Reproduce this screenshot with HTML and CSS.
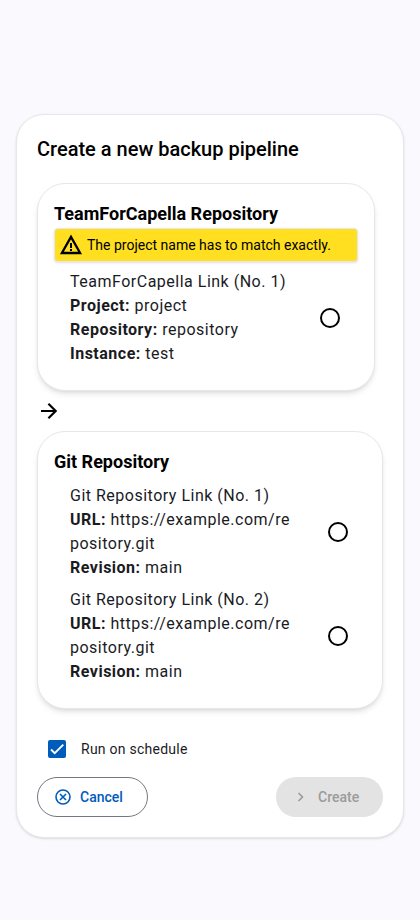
FILE: index.html
```html
<!DOCTYPE html>
<html lang="en">
<head>
<meta charset="utf-8">
<title>Create a new backup pipeline</title>
<link rel="stylesheet" href="styles.css">
</head>
<body>
<main class="dialog">
  <h2 class="title">Create a new backup pipeline</h2>
  <section class="card card-t4c">
    <h3 class="heading">TeamForCapella Repository</h3>
    <div class="warning">
      <svg class="icon" viewBox="0 0 24 24"><path d="M12 3.9 2.9 20H21.1Z" fill="none" stroke="#000" stroke-width="2.3"/><path d="M11 10h2v5h-2zM11 16h2v2h-2z"/></svg>
      <span>The project name has to match exactly.</span>
    </div>
    <div class="option">
      <div class="details"><div>TeamForCapella Link (No. 1)</div><div><b>Project:</b> project</div><div><b>Repository:</b> repository</div><div><b>Instance:</b> test</div></div>
      <span class="radio"></span>
    </div>
  </section>
  <svg class="arrow" viewBox="0 0 24 24"><path d="M4 12H18.5M11.4 4.7 18.7 12 11.4 19.3"/></svg>
  <section class="card card-git">
    <h3 class="heading">Git Repository</h3>
    <div class="option">
      <div class="details"><div>Git Repository Link (No. 1)</div><div><b>URL:</b> https://example.com/repository.git</div><div><b>Revision:</b> main</div></div>
      <span class="radio"></span>
    </div>
    <div class="option">
      <div class="details"><div>Git Repository Link (No. 2)</div><div><b>URL:</b> https://example.com/repository.git</div><div><b>Revision:</b> main</div></div>
      <span class="radio"></span>
    </div>
  </section>
  <div class="schedule">
    <span class="checkbox"><svg viewBox="0 0 24 24"><path d="M1.73 12.91 8.1 19.28 22.79 4.59"/></svg></span>
    <span>Run on schedule</span>
  </div>
  <div class="actions">
    <button class="button cancel"><svg viewBox="0 0 18 18"><circle cx="9" cy="9" r="7"/><path d="m6 6 6 6m0-6-6 6"/></svg>Cancel</button>
    <button class="button create" disabled><svg viewBox="0 0 18 18"><path d="m6.5 5 4 4-4 4"/></svg>Create</button>
  </div>
</main>
</body>
</html>
```
FILE: styles.css
```css
* { box-sizing: border-box; }
body {
  min-height: 100vh;
  margin: 0;
  padding: 114px 16px 0;
  background: #faf9fe;
  color: #000;
  font-family: Roboto, "Liberation Sans", sans-serif;
}
.dialog {
  width: 388px;
  height: 724px;
  padding: 20px;
  border: 1px solid #e5e7eb;
  border-radius: 28px;
  background: #fff;
  box-shadow: 0 1px 3px rgb(0 0 0 / 10%), 0 1px 2px -1px rgb(0 0 0 / 10%);
}
.title {
  margin: 0 0 20px;
  font-size: 20px;
  font-weight: 500;
  line-height: 28px;
}
.card {
  padding: 16px;
  border: 1px solid #e5e7eb;
  border-radius: 28px;
  background: #fff;
  box-shadow: 0 4px 6px -1px rgb(0 0 0 / 10%), 0 2px 4px -2px rgb(0 0 0 / 10%);
}
.card-t4c { width: 338px; height: 208px; }
.card-git { width: 346px; height: 278px; }
.heading {
  margin: 0;
  font-size: 18px;
  font-weight: 700;
  line-height: 28px;
}
.card-git .heading { margin-bottom: 4px; }
.warning {
  display: flex;
  align-items: center;
  gap: 4px;
  height: 34px;
  padding: 4px;
  border: 1px solid #e5e7eb;
  border-radius: 4px;
  background: #ffdf20;
  box-shadow: 0 1px 3px rgb(0 0 0 / 10%), 0 1px 2px -1px rgb(0 0 0 / 10%);
  font-size: 14px;
  white-space: nowrap;
}
.icon { width: 24px; height: 24px; flex: none; }
.option {
  display: flex;
  align-items: center;
  justify-content: space-between;
  padding: 4px 18px 4px 16px;
}
.card-t4c .option { padding-top: 8px; }
.details {
  width: 224px;
  font-size: 16px;
  line-height: 24px;
  letter-spacing: 0.5px;
  color: #1a1b1f;
  word-break: break-all;
}
.radio {
  width: 20px;
  height: 20px;
  flex: none;
  border: 2px solid #000;
  border-radius: 50%;
}
.arrow {
  display: block;
  width: 24px;
  height: 24px;
  margin: 8px 0;
  fill: none;
  stroke: #000;
  stroke-width: 2.2;
}
.schedule {
  display: flex;
  align-items: center;
  gap: 15px;
  height: 40px;
  margin-top: 20px;
  padding-left: 11px;
  color: #1a1b1f;
  font-size: 14px;
  letter-spacing: 0.25px;
}
.checkbox {
  width: 18px;
  height: 18px;
  border-radius: 2px;
  background: #005cbb;
}
.checkbox svg {
  display: block;
  width: 18px;
  height: 18px;
  padding: 2px;
  fill: none;
  stroke: #fff;
  stroke-width: 3.2;
}
.actions {
  display: flex;
  justify-content: space-between;
  margin-top: 8px;
}
.button {
  display: flex;
  align-items: center;
  gap: 8px;
  height: 40px;
  border-radius: 20px;
  font: 500 14px/20px Roboto, sans-serif;
  letter-spacing: 0;
}
.button svg {
  width: 18px;
  height: 18px;
  fill: none;
  stroke: currentColor;
  stroke-width: 1.6;
}
.cancel {
  width: 111px;
  padding: 0 16px;
  border: 1px solid #74777f;
  background: #fff;
  color: #005cbb;
}
.create {
  width: 107px;
  padding: 0 16px;
  border: 0;
  background: #e3e3e3;
  color: #9b9b9b;
}
```
